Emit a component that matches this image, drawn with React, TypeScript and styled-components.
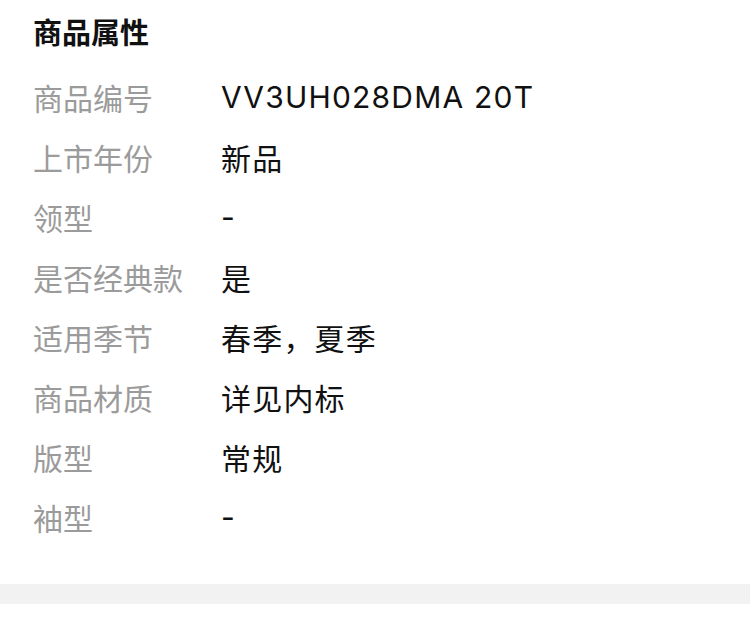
import styled, { createGlobalStyle } from "styled-components";

const GlobalStyle = createGlobalStyle`
  html, body {
    margin: 0;
    padding: 0;
    background: #ffffff;
  }
  body {
    font-family: "Noto Sans CJK SC", "Noto Sans", sans-serif;
  }
`;

const SPage = styled.div`
  width: 750px;
  background: #ffffff;
`;

const SSection = styled.section`
  padding: 9px 33px 37px;
`;

const STitle = styled.h2`
  margin: 0;
  height: 44px;
  line-height: 44px;
  font-size: 29px;
  font-weight: 700;
  color: #111111;
`;

const SList = styled.div`
  margin-top: 14px;
  display: flex;
  flex-direction: column;
`;

const SRow = styled.div`
  display: flex;
  align-items: center;
  height: 60px;
`;

const SLabel = styled.span`
  width: 188px;
  flex-shrink: 0;
  font-size: 30px;
  color: #9b9b9b;
`;

const SValue = styled.span`
  font-family: "Inter", "Noto Sans CJK SC", sans-serif;
  font-size: 30px;
  letter-spacing: 1.2px;
  color: #111111;
`;

const SDivider = styled.div`
  height: 20px;
  background: #f2f2f2;
`;

const attributes: [string, string][] = [
  ["商品编号", "VV3UH028DMA 20T"],
  ["上市年份", "新品"],
  ["领型", "-"],
  ["是否经典款", "是"],
  ["适用季节", "春季，夏季"],
  ["商品材质", "详见内标"],
  ["版型", "常规"],
  ["袖型", "-"],
];

export default function App() {
  return (
    <SPage>
      <GlobalStyle />
      <SSection>
        <STitle>商品属性</STitle>
        <SList>
          {attributes.map(([label, value]) => (
            <SRow key={label}>
              <SLabel>{label}</SLabel>
              <SValue>{value}</SValue>
            </SRow>
          ))}
        </SList>
      </SSection>
      <SDivider />
    </SPage>
  );
}
